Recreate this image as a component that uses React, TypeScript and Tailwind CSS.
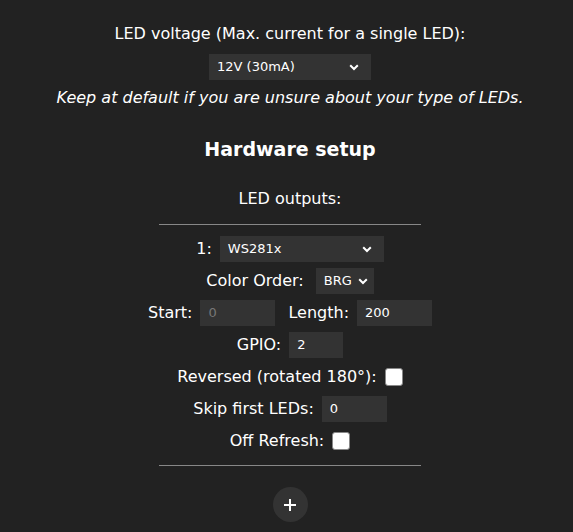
import React from 'react';

const Chevron: React.FC = () => (
  <svg width="10" height="7" viewBox="0 0 10 7" className="shrink-0">
    <path d="M1.2 1.2 L5 5 L8.8 1.2" fill="none" stroke="#fff" strokeWidth="2" />
  </svg>
);

interface FakeSelectProps {
  value: string;
  className: string;
}

const FakeSelect: React.FC<FakeSelectProps> = ({ value, className }) => (
  <div className={`flex items-center justify-between h-[26px] bg-[#333] text-[13px] text-white pl-2 pr-2 ${className}`}>
    <span>{value}</span>
    <Chevron />
  </div>
);

const Field: React.FC<{ value: string; className: string; muted?: boolean }> = ({ value, className, muted }) => (
  <div className={`flex items-center h-[26px] bg-[#333] text-[13px] px-2 ${muted ? 'text-[#777]' : 'text-white'} ${className}`}>
    {value}
  </div>
);

const Check: React.FC = () => <span className="inline-block w-[18px] h-[18px] bg-white rounded-[3px] border border-[#888]" />;

const Row: React.FC<{ children: React.ReactNode }> = ({ children }) => (
  <div className="flex items-center justify-center h-8 gap-2">{children}</div>
);

export default function App() {
  return (
    <div className="w-[573px] h-[532px] bg-[#222] text-white overflow-hidden flex flex-col items-center pl-[7px] font-['DejaVu_Sans',sans-serif] text-[16px]">
      <div className="mt-[22px] h-6 flex items-center">LED voltage (Max. current for a single LED):</div>
      <FakeSelect value="12V (30mA)" className="w-[162px] mt-[8px] pr-3" />
      <div className="mt-[6px] h-6 flex items-center italic">Keep at default if you are unsure about your type of LEDs.</div>

      <h2 className="mt-[25px] h-7 flex items-center text-[19px] font-bold">Hardware setup</h2>

      <div className="mt-[24px] h-6 flex items-center">LED outputs:</div>
      <hr className="w-[262px] mt-[13px] border-t border-[#888]" />

      <div className="mt-[8px] flex flex-col">
        <Row>
          <span>1:</span>
          <FakeSelect value="WS281x" className="w-[164px] pr-3" />
        </Row>
        <Row>
          <span>Color Order:</span>
          <FakeSelect value="BRG" className="w-[58px] ml-[4px] pl-[8px] pr-[6px]" />
        </Row>
        <Row>
          <span>Start:</span>
          <Field value="0" className="w-[75px]" muted />
          <span className="ml-[5px]">Length:</span>
          <Field value="200" className="w-[75px]" />
        </Row>
        <Row>
          <span>GPIO:</span>
          <Field value="2" className="w-[54px]" />
        </Row>
        <Row>
          <span>Reversed (rotated 180°):</span>
          <Check />
        </Row>
        <Row>
          <span>Skip first LEDs:</span>
          <Field value="0" className="w-[65px]" />
        </Row>
        <Row>
          <span>Off Refresh:</span>
          <Check />
        </Row>
      </div>

      <hr className="w-[262px] mt-[8px] border-t border-[#888]" />

      <button className="mt-[21px] w-[35px] h-[35px] rounded-full bg-[#333] flex items-center justify-center">
        <svg width="14" height="14" viewBox="0 0 14 14">
          <path d="M7 1 V13 M1 7 H13" stroke="#fff" strokeWidth="2" />
        </svg>
      </button>
    </div>
  );
}
